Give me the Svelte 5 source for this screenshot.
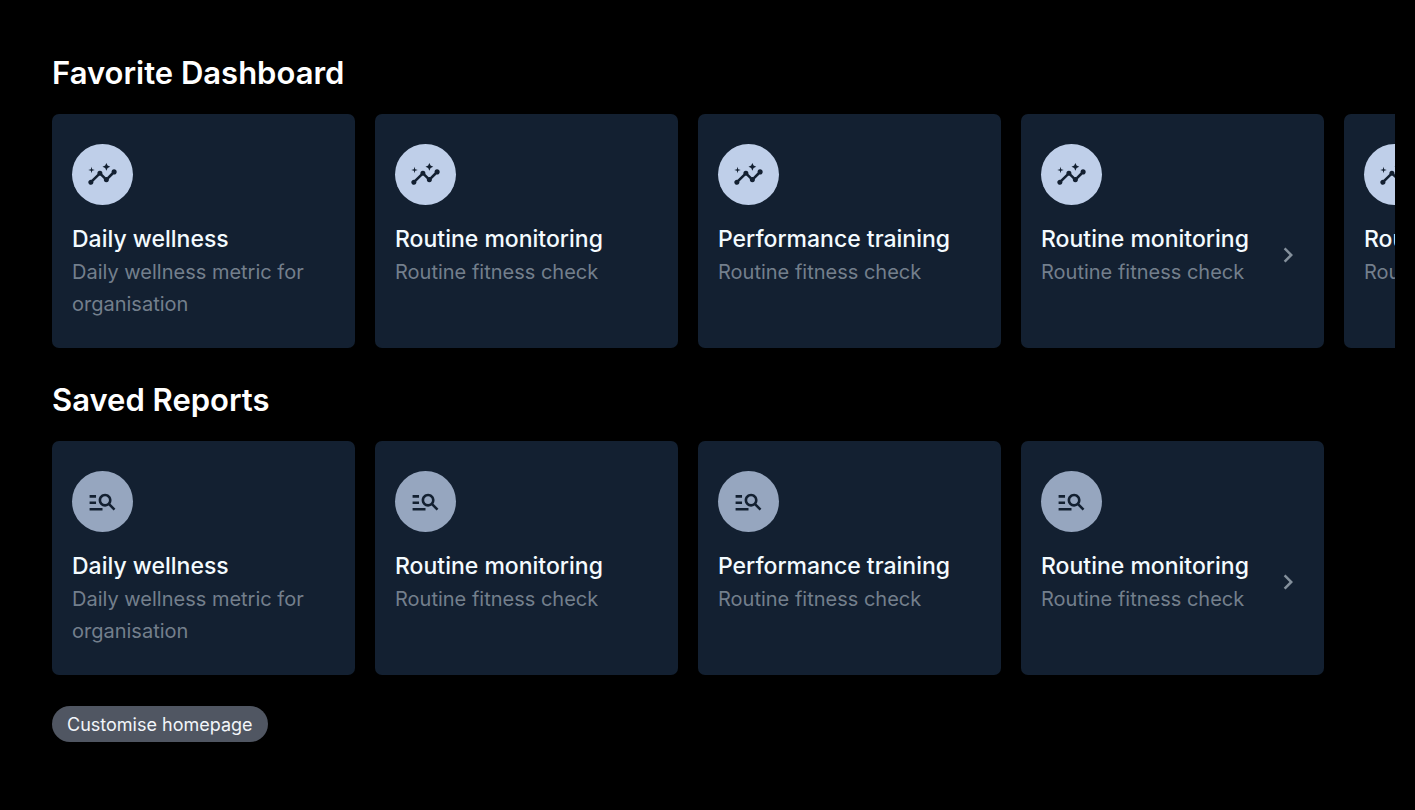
<script lang="ts">
  type Card = { title: string; text: string; more?: boolean };
  type Section = { id: string; title: string; icon: 'insights' | 'search'; cards: Card[] };

  let { onCustomise } = $props<{ onCustomise?: () => void }>();

  const cards: Card[] = [
    { title: 'Daily wellness', text: 'Daily wellness metric for organisation' },
    { title: 'Routine monitoring', text: 'Routine fitness check' },
    { title: 'Performance training', text: 'Routine fitness check' },
    { title: 'Routine monitoring', text: 'Routine fitness check', more: true }
  ];

  const sections: Section[] = [
    {
      id: 'favorites',
      title: 'Favorite Dashboard',
      icon: 'insights',
      cards: [...cards, { title: 'Routine monitoring', text: 'Routine fitness check' }]
    },
    { id: 'reports', title: 'Saved Reports', icon: 'search', cards }
  ];

  let scrollers: Record<string, HTMLElement> = $state({});

  function scrollNext(id: string) {
    scrollers[id]?.scrollBy({ left: 323, behavior: 'smooth' });
  }
</script>

<main class="home">
  {#each sections as section (section.id)}
    <section class="section">
      <h2>{section.title}</h2>
      <ul class="cards" bind:this={scrollers[section.id]}>
        {#each section.cards as card}
          <li class="card">
            <div class="icon" class:muted={section.icon === 'search'}>
              <svg width="31" height="31" viewBox="0 0 24 24" fill="currentColor" aria-hidden="true">
                {#if section.icon === 'insights'}
                  <path d="M21 8c-1.45 0-2.26 1.44-1.93 2.51l-3.55 3.56c-.3-.09-.74-.09-1.04 0l-2.55-2.55C12.27 10.45 11.46 9 10 9c-1.45 0-2.27 1.44-1.93 2.52l-4.56 4.55C2.44 15.74 1 16.55 1 18c0 1.1.9 2 2 2 1.45 0 2.26-1.44 1.93-2.51l4.55-4.56c.3.09.74.09 1.04 0l2.55 2.55C12.73 16.55 13.54 18 15 18c1.45 0 2.27-1.44 1.93-2.52l3.56-3.55C21.56 12.26 23 11.45 23 10c0-1.1-.9-2-2-2z" />
                  <path d="M15 9l.94-2.07L18 6l-2.06-.93L15 3l-.92 2.07L12 6l2.08.93L15 9zM3.5 11L4 9l2-.5L4 8l-.5-2L3 8l-2 .5L3 9l.5 2z" />
                {:else}
                  <path d="M7 9H2V7h5v2zm0 3H2v2h5v-2zm13.59 7l-3.83-3.83c-.8.52-1.74.83-2.76.83-2.76 0-5-2.24-5-5s2.24-5 5-5 5 2.24 5 5c0 1.02-.31 1.96-.83 2.75L22 17.59 20.59 19zM17 11c0-1.65-1.35-3-3-3s-3 1.35-3 3 1.35 3 3 3 3-1.35 3-3zM2 19h10v-2H2v2z" />
                {/if}
              </svg>
            </div>
            <div class="body">
              <div class="copy">
                <h3>{card.title}</h3>
                <p>{card.text}</p>
              </div>
              {#if card.more}
                <button class="next" aria-label="Show more" onclick={() => scrollNext(section.id)}>
                  <svg width="30" height="30" viewBox="0 0 24 24" fill="currentColor" aria-hidden="true">
                    <path d="M10 6L8.590 7.410 13.170 12l-4.580 4.590L10 18l6-6z" />
                  </svg>
                </button>
              {/if}
            </div>
          </li>
        {/each}
      </ul>
    </section>
  {/each}

  <button class="customise" onclick={() => onCustomise?.()}>Customise homepage</button>
</main>

<style>
  :global(body) {
    background: #000;
  }

  .home {
    padding: 53px 20px 53px 52px;
    font-family: Inter, 'Liberation Sans', sans-serif;
    color: #fff;
  }

  .section + .section {
    margin-top: 32px;
  }

  h2 {
    margin: 0 0 21px;
    font-size: 31px;
    line-height: 40px;
    font-weight: 600;
  }

  .cards {
    display: flex;
    gap: 20px;
    margin: 0;
    padding: 0;
    list-style: none;
    overflow-x: auto;
    scrollbar-width: none;
  }

  .card {
    flex: 0 0 303px;
    box-sizing: border-box;
    padding: 30px 20px 28px;
    border-radius: 7px;
    background: #132031;
  }

  .icon {
    display: flex;
    align-items: center;
    justify-content: center;
    width: 61px;
    height: 61px;
    margin-bottom: 17px;
    border-radius: 50%;
    background: #bfcfe9;
    color: #132031;
  }

  .icon.muted {
    background: #96a6bf;
  }

  .body {
    display: flex;
    align-items: center;
  }

  .copy {
    flex: 1;
    min-width: 0;
  }

  h3 {
    margin: 0;
    font-size: 23px;
    line-height: 34px;
    font-weight: 500;
    color: #f4fbff;
  }

  p {
    margin: 0;
    font-size: 20px;
    line-height: 32px;
    color: #737f8c;
  }

  .next {
    display: flex;
    align-items: center;
    justify-content: center;
    width: 32px;
    height: 32px;
    padding: 0;
    border: none;
    background: none;
    color: #84909c;
    cursor: pointer;
  }

  .customise {
    display: block;
    height: 36px;
    margin-top: 31px;
    padding: 0 15px;
    border: none;
    border-radius: 18px;
    background: #505662;
    color: #f2f5fa;
    font-family: inherit;
    font-size: 18px;
    font-weight: 400;
    cursor: pointer;
  }

  .customise:hover {
    background: #5c6370;
  }
</style>
